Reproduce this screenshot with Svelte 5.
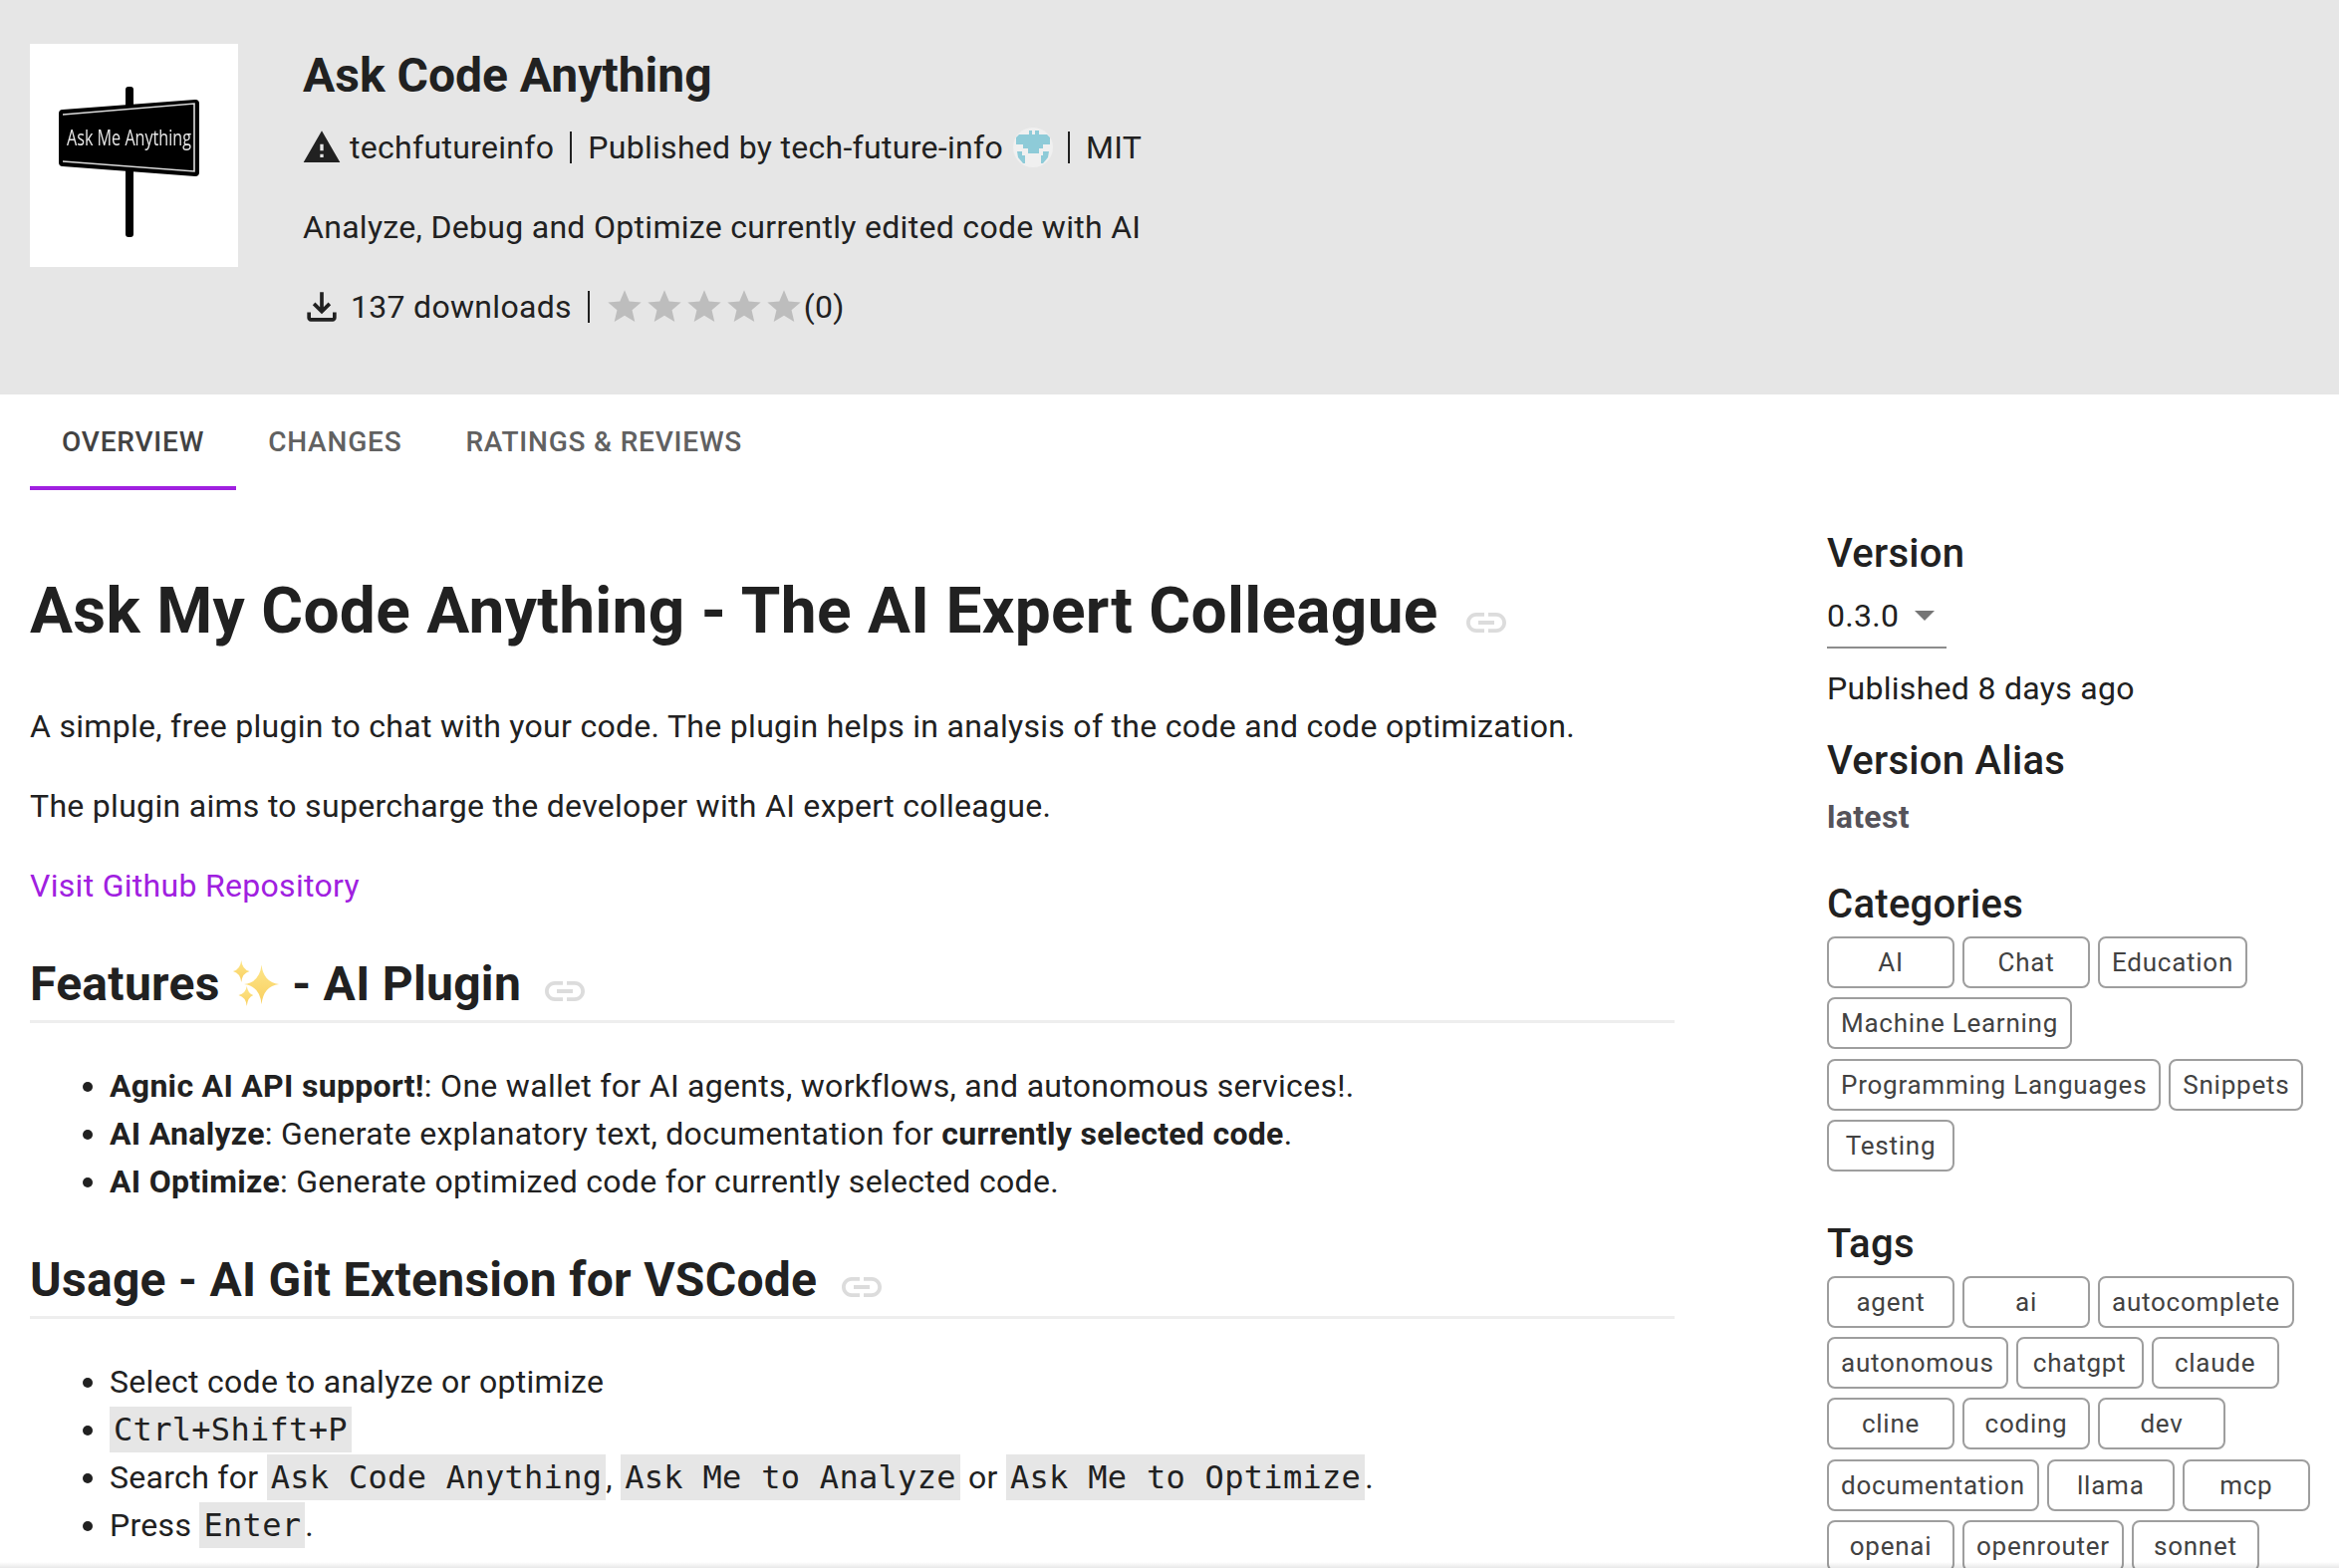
<script>
  const linkPath = "M3.9 12c0-1.71 1.39-3.1 3.1-3.1h4V7H7c-2.76 0-5 2.24-5 5s2.24 5 5 5h4v-1.9H7c-1.71 0-3.1-1.39-3.1-3.1zM8 13h8v-2H8v2zm9-6h-4v1.9h4c1.71 0 3.1 1.39 3.1 3.1s-1.39 3.1-3.1 3.1h-4V17h4c2.76 0 5-2.24 5-5s-2.24-5-5-5z";
  const star = "M12 17.27L18.18 21l-1.64-7.03L22 9.24l-7.19-.61L12 2 9.19 8.63 2 9.24l5.46 4.73L5.82 21z";
  const categories = ["AI", "Chat", "Education", "Machine Learning", "Programming Languages", "Snippets", "Testing"];
  const tags = ["agent", "ai", "autocomplete", "autonomous", "chatgpt", "claude", "cline", "coding", "dev", "documentation", "llama", "mcp", "openai", "openrouter", "sonnet"];
</script>

<div class="page">
  <header class="banner">
    <div class="logo">
      <svg viewBox="0 0 209 224" width="209" height="224">
        <rect x="96" y="43" width="8" height="151" rx="3" fill="#000" />
        <path d="M33 66 L166 56 Q170 56 170 60 L170 129 Q170 133 166 133 L33 123 Q29 123 29 119 L29 70 Q29 66 33 66 Z" fill="#000" />
        <path d="M33 71 L165 60 L165 128 L33 118" fill="none" stroke="#ddd" stroke-width="1.6" />
        <text x="37" y="102" class="logo-text" textLength="125" lengthAdjust="spacingAndGlyphs">Ask Me Anything</text>
      </svg>
    </div>
    <div class="info">
      <h2 class="title">Ask Code Anything</h2>
      <div class="meta">
        <svg class="warn" viewBox="0 0 24 24" width="40" height="40"><path fill="#212121" d="M1 21h22L12 2 1 21zm12-3h-2v-2h2v2zm0-4h-2v-4h2v4z" /></svg>
        <span>techfutureinfo</span>
        <i class="sep"></i>
        <span>Published by tech-future-info</span>
        <svg class="avatar" viewBox="0 0 40 40" width="40" height="40">
          <circle cx="20" cy="20" r="20" fill="#f0f0f0" />
          <path fill="#8ecbd8" d="M16 3h3v4h3V3h4v4h8l3 3v7h-7v4h-4v5h-11v-5H10v-4H3v-7l3-3h10z" />
          <path fill="#8ecbd8" d="M4 24h5v4h3v8h-2l-5-6zM30 24h6l-1 6-5 6h-2v-8h2z" />
        </svg>
        <i class="sep"></i>
        <span>MIT</span>
      </div>
      <p class="desc">Analyze, Debug and Optimize currently edited code with AI</p>
      <div class="meta stats">
        <svg class="dl" viewBox="0 0 24 24" width="44" height="44"><path fill="#212121" d="M18 15v3H6v-3H4v3c0 1.1.9 2 2 2h12c1.1 0 2-.9 2-2v-3h-2zm-1-4l-1.41-1.41L13 12.17V4h-2v8.17L8.41 9.59 7 11l5 5 5-5z" /></svg>
        <span>137 downloads</span>
        <i class="sep"></i>
        <span class="stars">
          {#each [0, 1, 2, 3, 4] as s (s)}
            <svg viewBox="0 0 24 24" width="40" height="40"><path fill="#bdbdbd" d={star} /></svg>
          {/each}
        </span>
        <span>(0)</span>
      </div>
    </div>
  </header>

  <nav class="tabs">
    <a class="tab active" href="#o">Overview</a>
    <a class="tab" href="#c">Changes</a>
    <a class="tab" href="#r">Ratings &amp; Reviews</a>
  </nav>

  <div class="body">
    <main class="content">
      <h1>Ask My Code Anything - The AI Expert Colleague <svg class="link h1-link" viewBox="2 7 20 10" width="40" height="20"><path d={linkPath} /></svg></h1>
      <p>A simple, free plugin to chat with your code. The plugin helps in analysis of the code and code optimization.</p>
      <p>The plugin aims to supercharge the developer with AI expert colleague.</p>
      <p><a class="repo" href="#g">Visit Github Repository</a></p>

      <h2 class="section first">Features
        <svg class="sparkles" viewBox="-1 -1 52 52" width="48" height="48">
          <defs><linearGradient id="sp" x1="0" y1="0" x2="0" y2="1"><stop offset="0" stop-color="#fde68a" /><stop offset="1" stop-color="#f9cf5f" /></linearGradient></defs>
          <path fill="url(#sp)" d="M31 5 Q33 24 50 26 Q33 28 31 48 Q29 28 12 26 Q29 24 31 5Z" />
          <path fill="url(#sp)" d="M9 0 Q10 10 18 12 Q10 14 9 24 Q8 14 0 12 Q8 10 9 0Z" />
          <path fill="url(#sp)" d="M15 28 Q16 36 22 38 Q16 40 15 50 Q14 40 6 38 Q14 36 15 28Z" />
        </svg>
        - AI Plugin <svg class="link" viewBox="2 7 20 10" width="40" height="20"><path d={linkPath} /></svg></h2>
      <ul>
        <li><strong>Agnic AI API support!</strong>: One wallet for AI agents, workflows, and autonomous services!.</li>
        <li><strong>AI Analyze</strong>: Generate explanatory text, documentation for <strong>currently selected code</strong>.</li>
        <li><strong>AI Optimize</strong>: Generate optimized code for currently selected code.</li>
      </ul>

      <h2 class="section">Usage - AI Git Extension for VSCode <svg class="link" viewBox="2 7 20 10" width="40" height="20"><path d={linkPath} /></svg></h2>
      <ul>
        <li>Select code to analyze or optimize</li>
        <li><code>Ctrl+Shift+P</code></li>
        <li>Search for <code>Ask Code Anything</code>, <code>Ask Me to Analyze</code> or <code>Ask Me to Optimize</code>.</li>
        <li>Press <code>Enter</code>.</li>
      </ul>
    </main>

    <aside class="side">
      <h3 class="first-h">Version</h3>
      <div class="select"><span>0.3.0</span><i class="caret"></i></div>
      <div class="published">Published 8 days ago</div>
      <h3 class="alias">Version Alias</h3>
      <div class="latest">latest</div>
      <h3 class="group">Categories</h3>
      <div class="chips">
        {#each categories as c (c)}<span class="chip">{c}</span>{/each}
      </div>
      <h3 class="group tags-h">Tags</h3>
      <div class="chips">
        {#each tags as t (t)}<span class="chip">{t}</span>{/each}
      </div>
    </aside>
  </div>
  <div class="fade"></div>
</div>

<style>
  :global(body) { margin: 0; background: #fff; }
  .page {
    position: relative;
    width: 2348px;
    height: 1574px;
    overflow: hidden;
    font-family: Roboto, sans-serif;
    font-size: 32px;
    line-height: 48px;
    letter-spacing: 0.3px;
    color: #212121;
    background: #fff;
  }
  .banner {
    display: flex;
    height: 396px;
    box-sizing: border-box;
    padding: 44px 30px 0;
    background: #e6e6e6;
  }
  .logo { width: 209px; height: 224px; background: #fff; flex: none; margin-right: 65px; }
  .logo svg { display: block; filter: blur(0.5px); }
  .logo-text { font-family: "Open Sans", sans-serif; font-size: 22px; fill: #e8e8e8; letter-spacing: 0; }
  .title { margin: 0 0 17px; font-size: 48px; line-height: 63px; font-weight: 700; letter-spacing: 0; }
  .meta { display: flex; align-items: center; height: 48px; }
  .warn { margin: 0 8px 0 -1px; }
  .sep { width: 2px; height: 32px; background: #212121; margin: 0 16px; flex: none; }
  .avatar { margin-left: 10px; margin-right: -1px; }
  .desc { margin: 32px 0; }
  .dl { margin: 0 7px 0 -3px; }
  .stars { display: flex; margin-left: -1px; }
  .tabs { display: flex; height: 96px; padding-left: 30px; }
  .tab {
    display: flex;
    align-items: center;
    height: 96px;
    box-sizing: border-box;
    padding: 0 32px;
    font-size: 28px;
    font-weight: 500;
    letter-spacing: 0.8px;
    text-transform: uppercase;
    text-decoration: none;
    color: #616161;
  }
  .tab.active { color: #424242; box-shadow: inset 0 -4px 0 #a020e0; }
  .body { display: flex; padding: 0 20px 0 30px; }
  .content { width: 1651px; flex: none; margin-right: 153px; }
  h1 { margin: 84px 0 0; font-size: 64px; line-height: 76px; font-weight: 700; letter-spacing: 0.3px; }
  .content p { margin: 32px 0; }
  .content h1 + p { margin-top: 53px; }
  .repo { color: #a020e0; text-decoration: none; }
  .section {
    margin: 0;
    padding-bottom: 6px;
    border-bottom: 3px solid #eee;
    font-size: 48px;
    line-height: 60px;
    font-weight: 700;
    letter-spacing: 0.3px;
  }
  .section.first { margin-top: 45px; }
  .link { fill: #dcdcdc; margin-left: 12px; vertical-align: -1px; }
  .h1-link { vertical-align: 0; }
  .sparkles { vertical-align: -7px; }
  ul { margin: 39px 0 45px; padding: 0 0 0 80px; }
  li { height: 48px; }
  code {
    font-family: "DejaVu Sans Mono", monospace;
    font-size: 32px;
    letter-spacing: 0.3px;
    background: #e6e6e6;
    padding: 4px;
  }
  .side { width: 494px; flex: none; }
  h3 { margin: 0; font-size: 40px; line-height: 48px; font-weight: 500; letter-spacing: 0.3px; }
  .first-h { margin-top: 40px; }
  .select {
    display: flex;
    align-items: center;
    width: 120px;
    height: 46px;
    margin-top: 15px;
    padding-bottom: 8px;
    border-bottom: 2px solid #8c8c8c;
  }
  .caret { width: 0; height: 0; margin-left: 16px; border: 10px solid transparent; border-top-color: #757575; border-bottom: 0; }
  .published { margin-top: 16px; }
  .alias { margin-top: 25px; }
  .latest { margin-top: 8px; font-weight: 700; color: #55535a; }
  .group { margin-top: 40px; }
  .tags-h { margin-top: 49px; }
  .chips { display: flex; flex-wrap: wrap; gap: 9.25px 8px; margin-top: 8px; }
  .chip {
    box-sizing: border-box;
    min-width: 128px;
    height: 52px;
    padding: 0 12px;
    display: flex;
    align-items: center;
    justify-content: center;
    border: 2.5px solid #9e9e9e;
    border-radius: 8px;
    font-size: 26px;
    letter-spacing: 0.75px;
    color: #424242;
  }
  .fade {
    position: absolute;
    left: 0;
    right: 0;
    bottom: 0;
    height: 6px;
    background: linear-gradient(to bottom, rgba(0,0,0,0), rgba(0,0,0,0.09));
  }
</style>
